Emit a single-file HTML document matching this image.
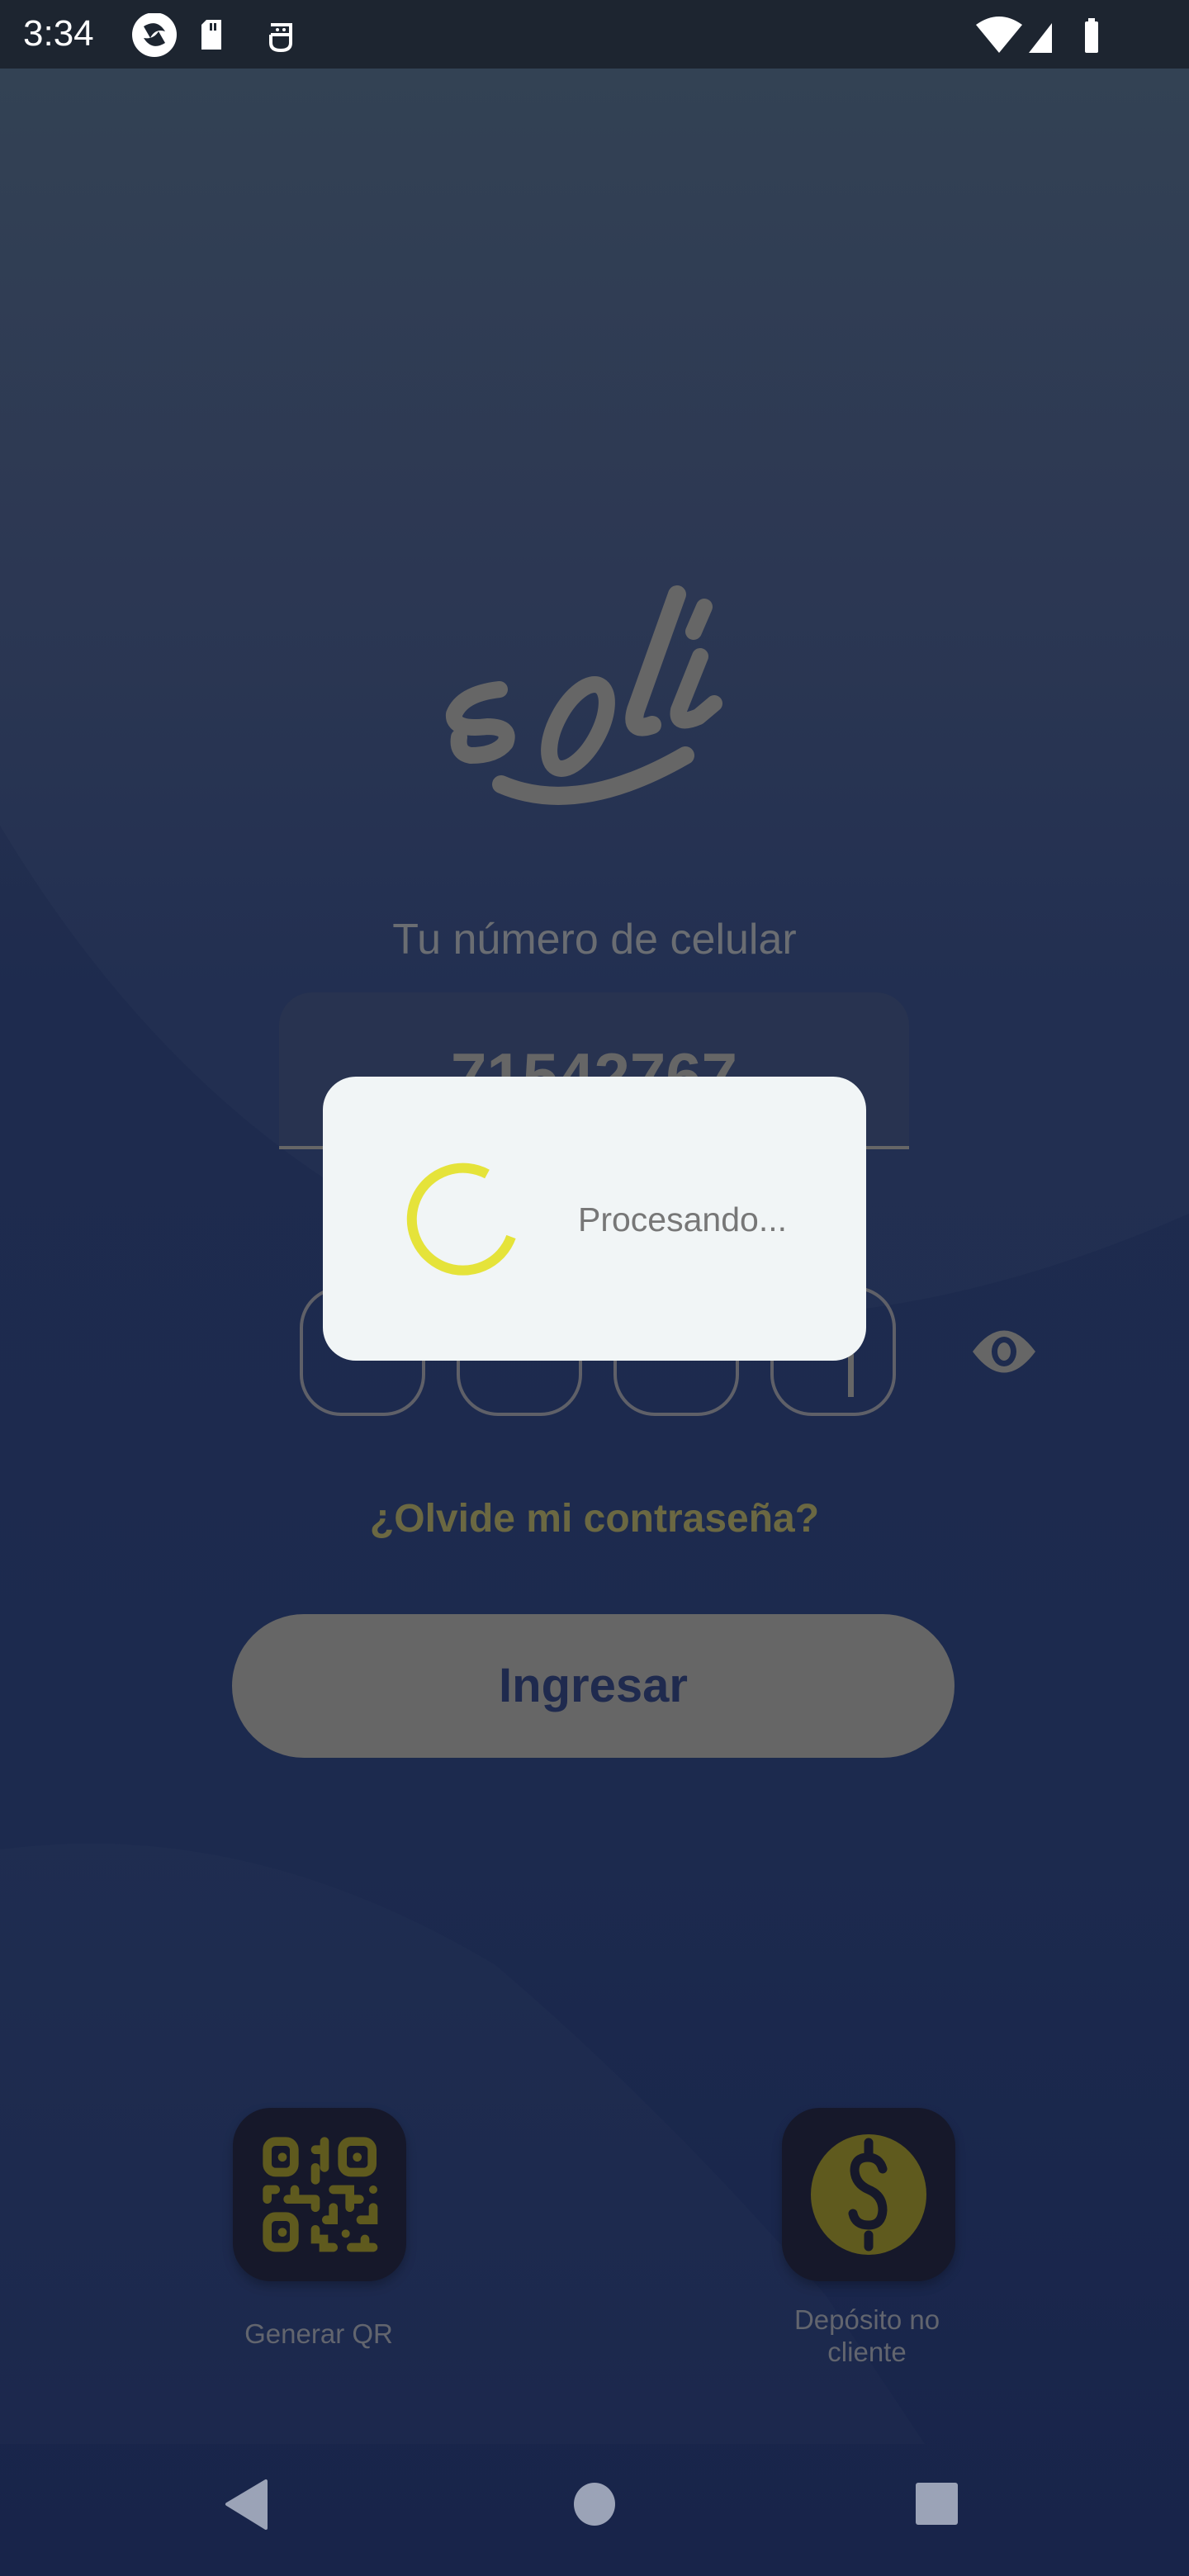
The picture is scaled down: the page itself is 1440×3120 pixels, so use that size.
<!DOCTYPE html>
<html><head><meta charset="utf-8"><style>
*{margin:0;padding:0;box-sizing:border-box}
body{width:1440px;height:3120px;overflow:hidden;position:relative;font-family:"Liberation Sans",sans-serif;background:linear-gradient(180deg,#2f3f51 83px,#283450 700px,#1e2b4e 1200px,#1c2a4e 2200px,#18244a 3120px)}
.abs{position:absolute}
.t{position:absolute;left:0;width:1440px;text-align:center}
</style></head><body>
<svg class="abs" style="left:0;top:0" width="1440" height="3120">
<path d="M0 1000 Q300 1500 800 1590 Q1100 1620 1440 1470 L1440 83 L0 83Z" fill="#ffffff" opacity="0.02"/>
<path d="M0 2240 Q300 2200 600 2380 Q800 2550 1000 2780 L1120 2960 L0 2960Z" fill="#ffffff" opacity="0.015"/>
</svg>
<div class="abs" style="left:0;top:0;width:1440px;height:83px;background:#1d2530"></div>
<div class="abs" style="left:28px;top:16px;color:#fff;font-size:44px">3:34</div>
<svg class="abs" style="left:158px;top:16px" width="230" height="54">
<circle cx="29" cy="26" r="27" fill="#fff"/><path d="M16 16 Q32 6 42 22 Q30 18 24 30Z M42 36 Q26 46 16 30 Q28 32 34 22Z" fill="#1d2530"/>
<path d="M92 8 h18 v36 h-24 v-30z" fill="#fff"/><rect x="96" y="12" width="3" height="9" fill="#1d2530"/><rect x="101" y="12" width="3" height="9" fill="#1d2530"/>
<path d="M170 14 h24 v12 h-24 M170 26 v10 q0 9 12 9 q12 0 12-9 v-10" stroke="#fff" stroke-width="4" fill="none"/><circle cx="178" cy="20" r="2" fill="#fff"/><circle cx="186" cy="20" r="2" fill="#fff"/>
</svg>
<svg class="abs" style="left:1180px;top:18px" width="160" height="48">
<path d="M2 12 Q30 -8 58 12 L30 46Z" fill="#fff"/>
<path d="M66 46 L94 10 L94 46Z" fill="#fff"/>
<rect x="134" y="8" width="16" height="38" rx="2" fill="#fff"/><rect x="138" y="4" width="8" height="6" fill="#fff"/>
</svg>
<svg class="abs" style="left:0;top:0" width="1440" height="1100" fill="none" stroke="#666" stroke-linecap="round" stroke-linejoin="round">
<path d="M605 835 Q560 840 550 865 Q548 885 590 880 Q620 880 612 900 Q600 915 570 915 Q553 912 556 893" stroke-width="20"/>
<ellipse cx="700" cy="880" rx="26" ry="56" transform="rotate(28 700 880)" stroke-width="20"/>
<path d="M820 720 L770 860 Q762 888 790 878" stroke-width="22"/>
<path d="M848 795 L822 860 Q818 880 846 868 L865 852" stroke-width="20"/>
<path d="M853 735 L840 765" stroke-width="20"/>
<path d="M607 950 Q700 990 830 915" stroke-width="22"/>
</svg>
<div class="t" style="top:1108px;font-size:52px;color:#6a6d72">Tu número de celular</div>
<div class="abs" style="left:338px;top:1202px;width:763px;height:190px;background:#283350;border-radius:40px 40px 0 0;border-bottom:4px solid #666;overflow:hidden">
<div style="position:absolute;left:0;width:763px;top:56px;text-align:center;font-size:78px;font-weight:bold;color:#666">71542767</div>
</div>
<div class="abs" style="left:363px;top:1558px;width:152px;height:157px;border:4px solid #5f6068;border-radius:50px"></div>
<div class="abs" style="left:553px;top:1558px;width:152px;height:157px;border:4px solid #5f6068;border-radius:50px"></div>
<div class="abs" style="left:743px;top:1558px;width:152px;height:157px;border:4px solid #5f6068;border-radius:50px"></div>
<div class="abs" style="left:933px;top:1558px;width:152px;height:157px;border:4px solid #5f6068;border-radius:50px"></div>
<div class="abs" style="left:1027px;top:1640px;width:7px;height:52px;background:#666"></div>
<svg class="abs" style="left:1176px;top:1608px" width="80" height="58">
<path d="M2 29 Q40 -22 78 29 Q40 80 2 29Z" fill="#666"/><ellipse cx="40" cy="29" rx="15" ry="18" fill="#1e2b4e"/><ellipse cx="40" cy="29" rx="8" ry="11" fill="#666"/>
</svg>
<div class="t" style="top:1812px;font-size:48px;font-weight:bold;color:#6b6842">¿Olvide mi contraseña?</div>
<div class="abs" style="left:281px;top:1955px;width:875px;height:174px;border-radius:87px;background:#666;color:#1f2a4e;font-size:58px;font-weight:bold;text-align:center;line-height:174px">Ingresar</div>
<div class="abs" style="left:282px;top:2553px;width:210px;height:210px;border-radius:46px;background:#16182a;box-shadow:0 6px 12px rgba(0,0,0,.25)"></div>
<svg class="abs" style="left:282px;top:2553px" width="210" height="210" viewBox="35 38 630 630" fill="none" stroke="#5f5a1e" stroke-width="32" stroke-linecap="round">
<rect x="160" y="160" width="98" height="112" rx="30"/><rect x="433" y="160" width="108" height="112" rx="30"/><rect x="160" y="433" width="98" height="112" rx="30"/>
<g fill="#5f5a1e" stroke="none"><circle cx="215" cy="217" r="16"/><circle cx="487" cy="217" r="16"/><circle cx="215" cy="490" r="16"/><circle cx="545" cy="335" r="15"/><circle cx="445" cy="495" r="15"/></g>
<path d="M368 160 V255 M335 190 H368 M335 255 V300 M160 335 H190 M160 335 V370 M235 370 H335 M260 335 V370 M335 370 V400 M400 335 H460 V400 M460 370 H495 M400 400 V445 H375 M545 400 V445 H500 M335 480 V515 H365 V545 H400 M465 545 H545 M515 515 V545"/>
</svg>
<div class="abs" style="left:947px;top:2553px;width:210px;height:210px;border-radius:46px;background:#16182a;box-shadow:0 6px 12px rgba(0,0,0,.25)"></div>
<svg class="abs" style="left:947px;top:2553px" width="210" height="210">
<ellipse cx="105" cy="105" rx="70" ry="73" fill="#5f5a1e"/>
<path d="M105 42 V56 M105 154 V168" stroke="#16182a" stroke-width="11" stroke-linecap="round"/>
<path d="M122 74 Q118 60 104 60 Q88 60 88 76 Q89 92 105 99 Q122 106 122 124 Q121 142 105 142 Q89 142 86 128" stroke="#16182a" stroke-width="11" fill="none" stroke-linecap="round"/>
</svg>
<div class="abs" style="left:236px;top:2808px;width:300px;text-align:center;font-size:33px;color:#62656e">Generar QR</div>
<div class="abs" style="left:900px;top:2790px;width:300px;text-align:center;font-size:33px;color:#62656e;line-height:39px">Depósito no<br>cliente</div>
<svg class="abs" style="left:0;top:2980px" width="1440" height="110">
<path d="M275 53 L322 25 L322 82Z" fill="#9ba3b7" stroke="#9ba3b7" stroke-width="4" stroke-linejoin="round"/>
<ellipse cx="720" cy="53" rx="25" ry="26" fill="#9ba3b7"/>
<rect x="1109" y="27" width="51" height="51" rx="3" fill="#9ba3b7"/>
</svg>
<div class="abs" style="left:391px;top:1304px;width:658px;height:344px;background:#f1f5f6;border-radius:40px"></div>
<svg class="abs" style="left:488px;top:1408px" width="160" height="160">
<path d="M102 14 A62 62 0 1 0 131 90" fill="none" stroke="#e5e33a" stroke-width="12"/>
</svg>
<div class="abs" style="left:700px;top:1454px;font-size:41px;color:#777">Procesando...</div>
</body></html>
